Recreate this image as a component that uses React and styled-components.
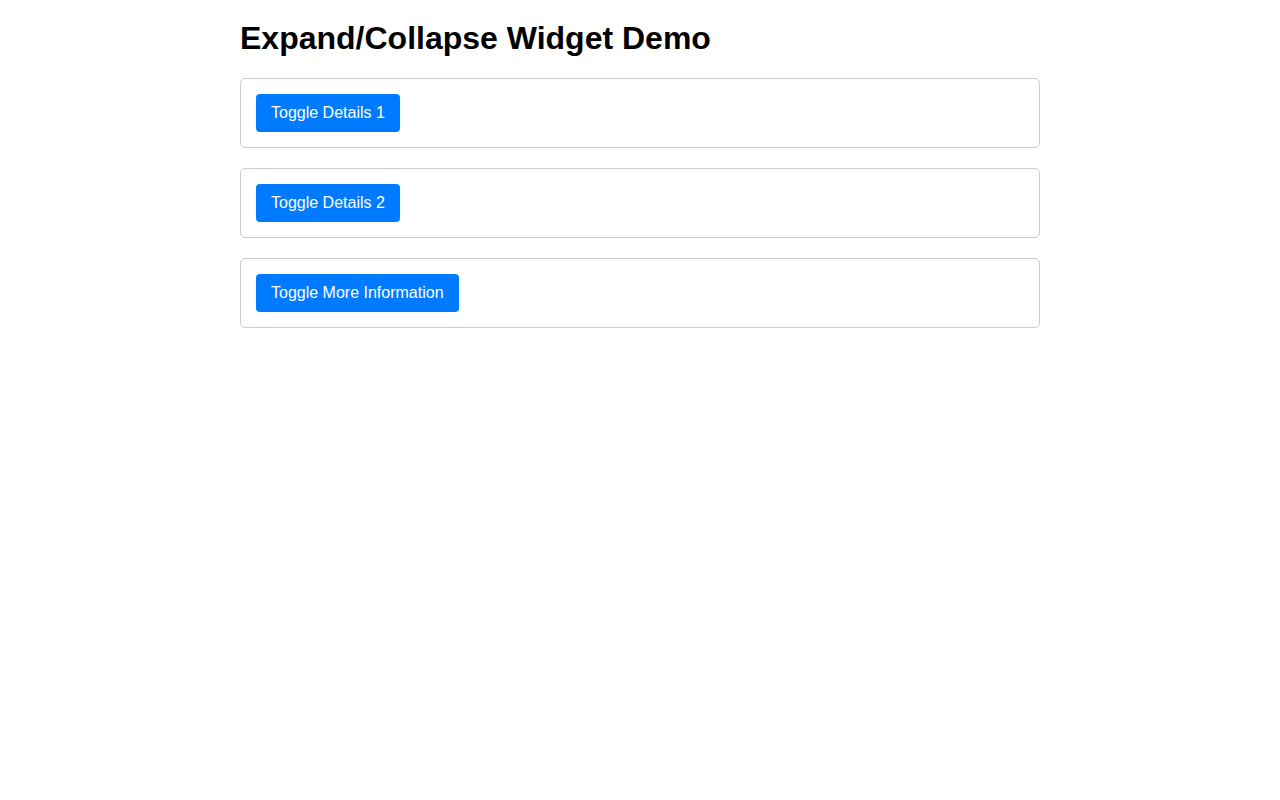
import React from "react";
import styled, { createGlobalStyle } from "styled-components";

const Global = createGlobalStyle`
  html, body { margin: 0; padding: 0; background: #fff; }
  body { font-family: "Liberation Sans", Arial, Helvetica, sans-serif; color: #000; }
`;

const Page = styled.div`
  max-width: 800px;
  margin: 0 auto;
  padding: 20px 0;
`;

const Title = styled.h1`
  font-size: 32px;
  font-weight: bold;
  line-height: 36.8px;
  margin: 0 0 21px;
`;

const List = styled.div`
  display: flex;
  flex-direction: column;
  gap: 20px;
`;

const Card = styled.div`
  border: 1px solid #ccc;
  border-radius: 5px;
  padding: 15px;
  display: flex;
  align-items: flex-start;
`;

const ToggleButton = styled.button`
  background: #007bff;
  color: #fff;
  border: none;
  border-radius: 4px;
  padding: 10px 15px;
  font-family: "Liberation Sans", Arial, Helvetica, sans-serif;
  font-size: 16px;
  line-height: 18px;
  cursor: pointer;
`;

const items = ["Toggle Details 1", "Toggle Details 2", "Toggle More Information"];

export default function App() {
  return (
    <>
      <Global />
      <Page>
        <Title>Expand/Collapse Widget Demo</Title>
        <List>
          {items.map((label) => (
            <Card key={label}>
              <ToggleButton>{label}</ToggleButton>
            </Card>
          ))}
        </List>
      </Page>
    </>
  );
}
